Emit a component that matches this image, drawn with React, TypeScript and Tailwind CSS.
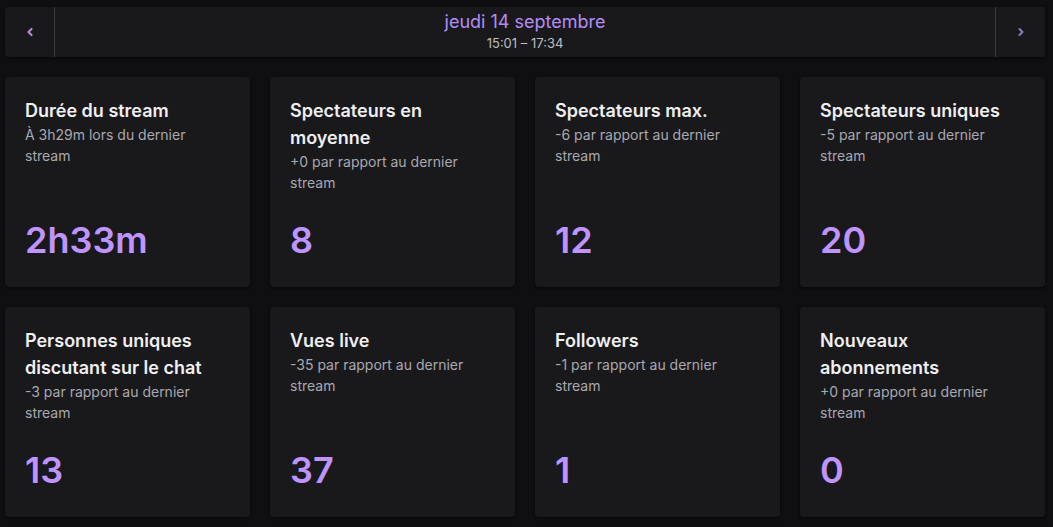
import React from "react";

const cards = [
  { title: "Durée du stream", sub: "À 3h29m lors du dernier stream", value: "2h33m" },
  { title: "Spectateurs en moyenne", sub: "+0 par rapport au dernier stream", value: "8" },
  { title: "Spectateurs max.", sub: "-6 par rapport au dernier stream", value: "12" },
  { title: "Spectateurs uniques", sub: "-5 par rapport au dernier stream", value: "20" },
  { title: "Personnes uniques discutant sur le chat", sub: "-3 par rapport au dernier stream", value: "13" },
  { title: "Vues live", sub: "-35 par rapport au dernier stream", value: "37" },
  { title: "Followers", sub: "-1 par rapport au dernier stream", value: "1" },
  { title: "Nouveaux abonnements", sub: "+0 par rapport au dernier stream", value: "0" },
];

function Chevron({ dir }: { dir: "left" | "right" }) {
  return (
    <svg width="8" height="10" viewBox="0 0 8 10" fill="none">
      {dir === "left" ? (
        <polyline points="5.5,2 2.5,5 5.5,8" stroke="#a98ae0" strokeWidth="2.2" strokeLinecap="round" strokeLinejoin="round" />
      ) : (
        <polyline points="2.5,2 5.5,5 2.5,8" stroke="#8e78c0" strokeWidth="2" strokeLinecap="round" strokeLinejoin="round" />
      )}
    </svg>
  );
}

export default function App() {
  return (
    <div
      className="w-[1053px] h-[527px] bg-[#0f0f11] pl-[5px] pt-[7px] overflow-hidden"
      style={{ fontFamily: "Inter, 'Noto Sans', sans-serif" }}
    >
      <div className="w-[1040px]">
        <div className="flex h-[50px] bg-[#19191c] rounded-[3px] shadow-[0_1px_3px_rgba(0,0,0,0.6)]">
          <button className="w-[50px] flex items-center justify-center border-r border-[#3a3a3f]">
            <Chevron dir="left" />
          </button>
          <div className="flex-1 flex flex-col items-center justify-center pb-[3px]">
            <div className="text-[18px] leading-[24px] text-[#b58cf5]">jeudi 14 septembre</div>
            <div className="text-[13px] leading-[18px] text-[#bdbdc4]">15:01 – 17:34</div>
          </div>
          <button className="w-[50px] flex items-center justify-center border-l border-[#3a3a3f]">
            <Chevron dir="right" />
          </button>
        </div>
        <div className="grid grid-cols-4 gap-5 mt-5">
          {cards.map((c) => (
            <div
              key={c.title}
              className="h-[210px] bg-[#19191c] rounded-[4px] shadow-[0_1px_3px_rgba(0,0,0,0.6)] px-5 pt-5 pb-[29px] flex flex-col"
            >
              <div className="text-[18px] leading-[27px] font-semibold text-[#efeff1]">{c.title}</div>
              <div className="text-[14px] leading-[21px] text-[#a8a8b0]">{c.sub}</div>
              <div className="mt-auto text-[36px] leading-none font-semibold text-[#bf94ff]">{c.value}</div>
            </div>
          ))}
        </div>
      </div>
    </div>
  );
}
